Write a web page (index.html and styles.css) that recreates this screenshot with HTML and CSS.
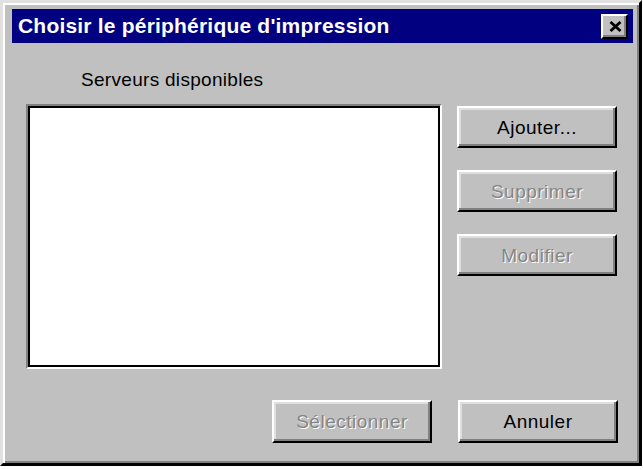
FILE: index.html
```html
<!DOCTYPE html>
<html lang="fr">
<head>
<meta charset="utf-8">
<title>Choisir le périphérique d'impression</title>
<link rel="stylesheet" href="styles.css">
</head>
<body>
<div class="window">
  <div class="titlebar">
    <span class="title">Choisir le périphérique d'impression</span>
    <button class="close" aria-label="Fermer">
      <svg width="13" height="11" viewBox="0 0 13 11"><path d="M1.5 1 L11.5 10 M11.5 1 L1.5 10" stroke="#000" stroke-width="2.8" fill="none"/></svg>
    </button>
  </div>
  <div class="content">
    <div class="main">
      <div class="left">
        <div class="label">Serveurs disponibles</div>
        <div class="listbox"><div class="listbox-inner"></div></div>
      </div>
      <div class="side">
        <button class="btn">Ajouter...</button>
        <button class="btn disabled">Supprimer</button>
        <button class="btn disabled">Modifier</button>
      </div>
    </div>
    <div class="footer">
      <button class="btn disabled">Sélectionner</button>
      <button class="btn">Annuler</button>
    </div>
  </div>
</div>
</body>
</html>
```
FILE: styles.css
```css
body {
  margin: 0;
  background: #fff;
  font-family: "Liberation Sans", Arial, sans-serif;
}

.window {
  width: 642px;
  height: 466px;
  box-sizing: border-box;
  background: #c0c0c0;
  border: 3px solid;
  border-color: #e0e0e0 #000 #000 #e0e0e0;
  box-shadow: inset 2px 2px 0 #fff, inset -2px -2px 0 #808080;
  padding: 6px 6px 0 9px;
  display: flex;
  flex-direction: column;
}

.titlebar {
  height: 34px;
  flex: none;
  background: #000080;
  display: flex;
  align-items: center;
  justify-content: space-between;
  padding: 0 5px 0 6px;
}

.title {
  color: #fff;
  font-weight: bold;
  font-size: 21px;
  letter-spacing: 0.2px;
  white-space: nowrap;
}

.close {
  width: 27px;
  height: 25px;
  box-sizing: border-box;
  background: #c0c0c0;
  border: 2px solid;
  border-color: #fff #000 #000 #fff;
  box-shadow: inset -2px -2px 0 #808080;
  display: flex;
  align-items: center;
  justify-content: center;
  padding: 0 0 0 1px;
  margin: 0;
}

.content {
  padding: 0 15px 0 14px;
}

.main {
  display: flex;
  gap: 15px;
}

.left {
  width: 416px;
  padding-top: 26px;
}

.label {
  font-size: 19px;
  line-height: 22px;
  letter-spacing: 0.3px;
  padding-left: 55px;
  color: #000;
}

.listbox {
  margin-top: 13px;
  height: 265px;
  box-sizing: border-box;
  border: 2px solid;
  border-color: #808080 #fff #fff #808080;
}

.listbox-inner {
  height: 100%;
  box-sizing: border-box;
  border: 2px solid #000;
  background: #fff;
}

.side {
  padding-top: 63px;
  display: flex;
  flex-direction: column;
  gap: 22px;
}

.btn {
  width: 160px;
  height: 42px;
  box-sizing: border-box;
  background: #c0c0c0;
  border: 2px solid;
  border-color: #fff #000 #000 #fff;
  box-shadow: inset -2px -2px 0 #808080, inset 2px 2px 0 #dfdfdf;
  font-family: "Liberation Sans", Arial, sans-serif;
  font-size: 19px;
  letter-spacing: 0.5px;
  color: #000;
  display: flex;
  align-items: center;
  justify-content: center;
  padding: 2px 0 0 0;
  margin: 0;
}

.btn.disabled {
  color: #858585;
  text-shadow: 1px 1px 0 #fff;
}

.footer {
  display: flex;
  justify-content: flex-end;
  gap: 26px;
  margin-top: 31px;
}

.footer .btn {
  height: 43px;
  padding-top: 0;
}
```
